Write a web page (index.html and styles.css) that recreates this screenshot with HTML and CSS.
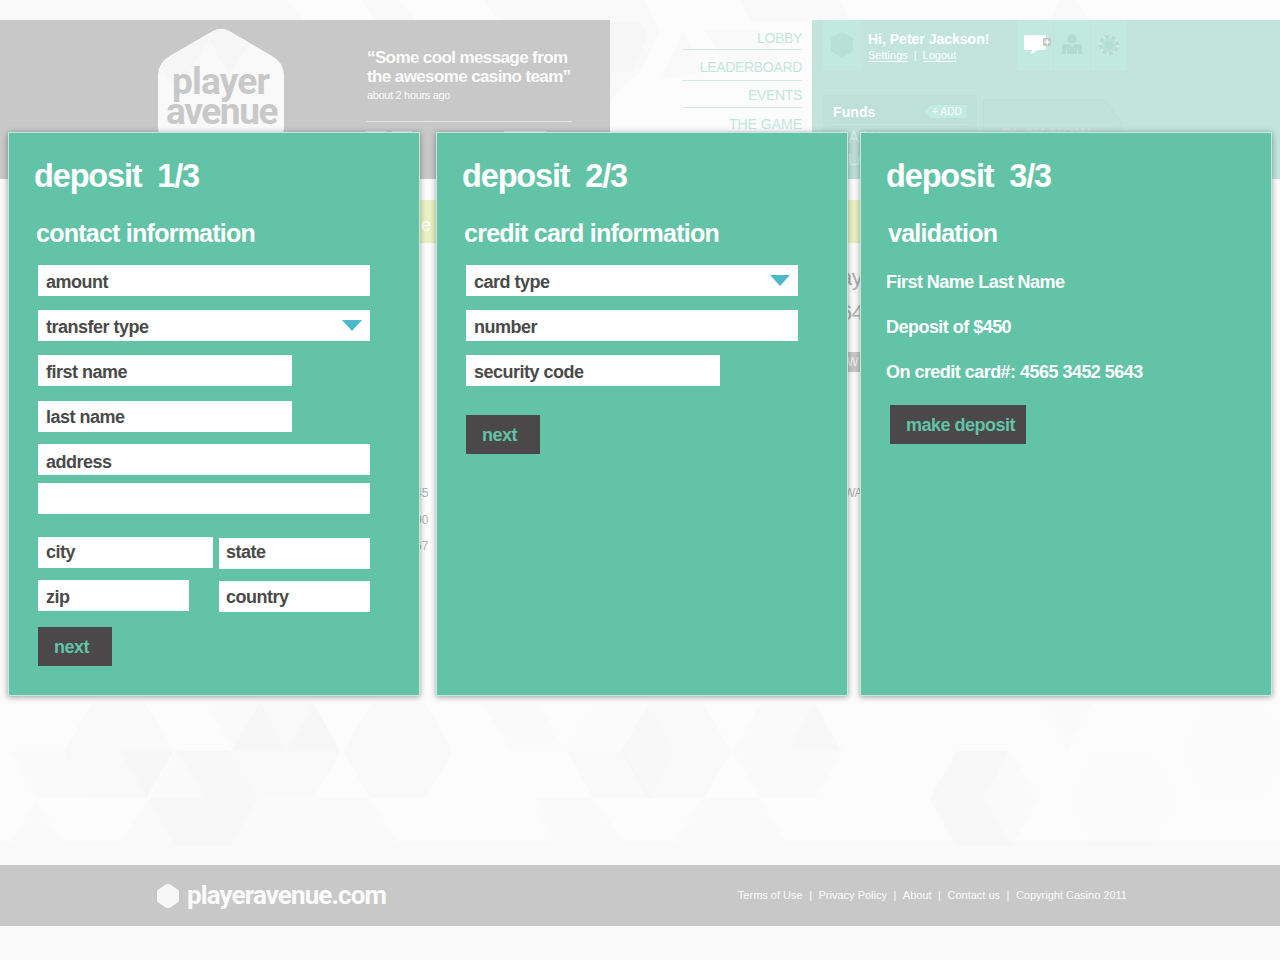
FILE: index.html
```html
<!DOCTYPE html>
<html lang="en">
<head>
<meta charset="utf-8">
<title>Player Avenue – Deposit</title>
<link rel="stylesheet" href="styles.css">
</head>
<body>
<div class="page">
  <svg class="backdrop" width="1280" height="960" viewBox="0 0 1280 960" aria-hidden="true">
    <rect width="1280" height="960" fill="#fcfcfc"/>
    <g fill="#000" fill-opacity=".012">
      <path d="M0 0H60L43 22H0ZM0 0H640V22H0ZM122 0H230L210 22H139ZM288 0L306 22H376L360 0ZM400 0L418 22H500L484 0ZM610 0H645L660 30L640 72L610 100ZM740 0H840L850 22H750ZM1060 0H1075L1092 22H1050Z"/>
      <path d="M610 22H640L648 35L632 72H610ZM705 30H760L786 72H730ZM660 80L683 30L705 72ZM0 180H20V700H0Z"/>
      <path id="hex" d="M92 703H146L172 747Q174 751 172 755L147 798H91L66 755Q64 751 66 747Z"/>
      <use href="#hex" x="167"/><use href="#hex" x="279"/><use href="#hex" x="557"/>
      <use href="#hex" x="669" opacity=".7"/><use href="#hex" x="502" opacity=".4"/><use href="#hex" x="1116" opacity=".4"/>
      <use href="#hex" x="84" y="48" opacity=".5"/><use href="#hex" x="865" y="48" opacity=".6"/><use href="#hex" x="1004" y="48" opacity=".4"/>
      <path d="M11 751H66L91 798H36ZM119 751H172L147 798ZM177 751H233L258 798H205ZM262 703L286 751H233L205 703ZM286 751L314 703L340 751ZM482 703H540L565 751H510ZM568 751H624L650 798H592ZM786 751L814 703L841 751ZM930 798L955 751H1009L984 798ZM1040 703H1092L1067 751Z" fill-opacity=".008"/>
      <path d="M36 800L62 841H11ZM147 798H258L285 841H122ZM258 798H370L397 841H285ZM535 798H592L625 841H550ZM700 798H760L786 841H675ZM930 798H984L1009 841H950Z" fill-opacity=".009"/>
      <path d="M0 841H1280V866H0ZM11 841H62V866H16ZM122 841H285L276 866H135ZM66 847H120L135 866H60ZM340 847H397L410 866H330ZM565 841H610L628 866H572ZM730 847H785L798 866H720ZM900 847H955L940 866H910ZM0 926H1280V960H0ZM70 926H170L160 942H66ZM175 926H300L290 942H180ZM335 926H449V942H342ZM122 942H172L160 960H110ZM342 942H449L440 960H352ZM510 942H555L570 960H520ZM730 926H840L830 942H738ZM1010 926H1054L1060 942H1010ZM1120 926H1170L1172 942H1122ZM1066 942H1118L1107 960H1077Z"/>
    </g>
  </svg>

  <header class="top">
    <div class="brand-bar">
      <div class="logo">
        <svg class="logo-shape" width="126" height="145" viewBox="0 0 126 145" aria-hidden="true">
          <path d="M55 2Q63-2 71 2L114 27Q126 34 126 46V99Q126 111 114 118L71 143Q63 147 55 143L12 118Q0 111 0 99V46Q0 34 12 27Z" fill="#f9f9f9"/>
          <path d="M51 10L71 46L92 14L71 2Q63-2 55 2ZM2 38L20 62L50 12V5L12 27Q4 32 2 38Z" fill="#f6f6f6"/>
        </svg>
        <div class="logo-text"><div>player</div><div class="second">avenue</div></div>
      </div>
      <div class="message">
        <p class="quote">“Some cool message from<br>the awesome casino team”</p>
        <p class="ago">about 2 hours ago</p>
        <div class="next-message"><i></i><i></i><i></i></div>
      </div>
    </div>
    <nav class="menu">
      <a>LOBBY</a><a>LEADERBOARD</a><a>EVENTS</a><a>THE GAME</a>
    </nav>
    <div class="account">
      <div class="user-row">
        <div class="avatar"><svg width="24" height="28" viewBox="0 0 24 28"><path d="M12 1L23 7V20L12 27L1 20V7Z" fill="#b8e0d7"/></svg></div>
        <div class="user">
          <strong>Hi, Peter Jackson!</strong>
          <div><a>Settings</a><span>|</span><a>Logout</a></div>
        </div>
        <div class="tools">
          <div class="tool"><svg width="32" height="28" viewBox="0 0 32 28"><path d="M7 4H25Q27 4 27 6V17Q27 19 25 19H19L12 23L13 19H7Q5 19 5 17V6Q5 4 7 4Z" fill="#fff"/><rect x="24" y="7" width="8" height="8" fill="#c3c9c7"/><path d="M28 8.500V13.500M25.500 11H30.500" stroke="#fff" stroke-width="1.500"/></svg></div>
          <div class="tool"><svg width="22" height="24" viewBox="0 0 22 24"><circle cx="11" cy="6" r="4.500" fill="#b2dcd2"/><path d="M1 21V13Q1 11 4 11H8L11 14L14 11H18Q21 11 21 13V21Z" fill="#b2dcd2"/><path d="M5.500 16V21M16.500 16V21" stroke="#c2e9e0"/></svg></div>
          <div class="tool"><svg width="22" height="22" viewBox="0 0 22 22"><circle cx="11" cy="11" r="8.500" fill="#bce3d9" stroke="#b6ddd3" stroke-width="3"/><circle cx="11" cy="11" r="8.500" fill="none" stroke="#cfece0" stroke-width="3" stroke-dasharray="2.500 4.170"/><circle cx="11" cy="11" r="4.500" fill="#b4ddd3"/></svg></div>
        </div>
      </div>
      <div class="money-row">
        <div class="funds">
          <div class="funds-head"><strong>Funds</strong><span class="add">+ ADD</span></div>
          <div class="funds-body">CASH<br>PLAY</div>
        </div>
        <div class="play"><svg width="140" height="60" viewBox="0 0 140 60"><path d="M.5 60V.5H117Q122 .5 125 5L140 27V60" fill="#c0e2da" stroke="#bbded6"/></svg><strong>PLAY NOW</strong></div>
      </div>
    </div>
  </header>

  <main class="content">
    <div class="banner"><span>e</span></div>
    <div class="stats-left"><span>45</span><span>90</span><span>67</span></div>
    <div class="stats-right"><b>ay</b><b>64</b><em>W</em><small>WA</small></div>
  </main>

  <footer class="footer">
    <div class="footer-logo">
      <svg width="22" height="24" viewBox="0 0 22 24"><path d="M9 .6Q11-.4 13 .6L20 5Q22 6 22 8V16Q22 18 20 19L13 23.400Q11 24.400 9 23.400L2 19Q0 18 0 16V8Q0 6 2 5Z" fill="#f7f7f7"/></svg>
      <span>playeravenue.com</span>
    </div>
    <div class="links"><a>Terms of Use</a><i>|</i><a>Privacy Policy</a><i>|</i><a>About</a><i>|</i><a>Contact us</a><i>|</i><span>Copyright Casino 2011</span></div>
  </footer>

  <div class="dialogs">
    <section class="dialog">
      <h1>deposit&nbsp; 1/3</h1>
      <h2>contact information</h2>
      <form class="form">
        <div class="field">amount</div>
        <div class="field select">transfer type<svg width="20" height="11"><path d="M0 0H20L10 11Z" fill="#4bb9cb"/></svg></div>
        <div class="field medium">first name</div>
        <div class="field medium last">last name</div>
        <div class="field address">address</div>
        <div class="field line2"></div>
        <div class="pair cities"><div class="field city">city</div><div class="field state">state</div></div>
        <div class="pair"><div class="field zip">zip</div><div class="field state">country</div></div>
        <div class="button submit">next</div>
      </form>
    </section>
    <section class="dialog">
      <h1>deposit&nbsp; 2/3</h1>
      <h2>credit card information</h2>
      <form class="form">
        <div class="field">card type<svg width="20" height="11"><path d="M0 0H20L10 11Z" fill="#4bb9cb"/></svg></div>
        <div class="field">number</div>
        <div class="field medium">security code</div>
        <div class="button card-next">next</div>
      </form>
    </section>
    <section class="dialog validation">
      <h1>deposit&nbsp; 3/3</h1>
      <h2>validation</h2>
      <div class="summary">
        <p>First Name Last Name</p>
        <p>Deposit of $450</p>
        <p>On credit card#: 4565 3452 5643</p>
      </div>
      <div class="button confirm">make deposit</div>
    </section>
  </div>
</div>
</body>
</html>
```

FILE: styles.css
```css
* { box-sizing: border-box; }
body { margin: 0; font-family: "Liberation Sans", Arial, sans-serif; background: #fcfcfc; }
h1, h2, p { margin: 0; }
svg { display: block; }
i, em { font-style: normal; }

.page { position: relative; width: 1280px; height: 960px; overflow: hidden; display: flex; flex-direction: column; padding-top: 20px; }
.backdrop { position: absolute; inset: 0; }

/* Header */
.top { position: relative; display: flex; height: 159px; flex: none; }
.brand-bar { width: 610px; background: #c8c8c8; display: flex; padding-left: 158px; }
.logo { position: relative; width: 126px; height: 145px; margin-top: 9px; }
.logo-shape { position: absolute; inset: 0; }
.logo-text { position: relative; padding: 38px 0 0 14px; font: 700 37px/30px Roboto, sans-serif; letter-spacing: -.8px; color: #c8c8c8; }
.logo-text .second { margin-left: -6px; letter-spacing: -1.4px; }
.message { width: 206px; margin-left: 82px; padding-top: 28px; color: #fbfbfb; white-space: nowrap; }
.quote { font-weight: 700; font-size: 17px; line-height: 19px; letter-spacing: -.61px; margin-left: 1px; }
.ago { font-size: 11px; line-height: 14px; margin: 2px 0 0 1px; letter-spacing: -.33px; }
.next-message { border-top: 1px solid #e6e6e6; margin-top: 19px; padding-top: 9px; display: flex; gap: 6px; }
.next-message i { width: 20px; height: 4px; background: #e8e8e8; }
.next-message i:last-child { width: 42px; margin-left: 86px; }

.menu { width: 202px; display: flex; flex-direction: column; padding: 7px 10px 0 72px; font-size: 14px; color: #c3e7dd; text-align: right; }
.menu a { border-bottom: 1px solid #d0ece5; height: 23px; line-height: 23px; letter-spacing: -.33px; }
.menu a:nth-child(2) { height: 31px; line-height: 34px; }
.menu a:nth-child(3) { height: 27px; line-height: 29px; }
.menu a:nth-child(4) { height: 33px; line-height: 33px; border: 0; letter-spacing: 0; }

.account { width: 468px; background: #c2e4dd; padding-left: 11px; color: #fff; }
.user-row { display: flex; height: 51px; }
.avatar { width: 38px; background: #c2e9e0; display: flex; align-items: center; justify-content: center; }
.avatar svg { margin-top: -1px; }
.user { width: 156px; padding: 10px 0 0 7px; font-size: 11px; white-space: nowrap; }
.user strong { display: block; font-size: 14px; line-height: 18px; }
.user div { line-height: 13px; margin-top: 1px; }
.user a { border-bottom: 1px solid #fff; display: inline-block; height: 13px; }
.user span { margin: 0 6px; }
.tools { display: flex; gap: 1px; }
.tool { width: 36px; background: #c2e9e0; display: flex; align-items: center; justify-content: center; }
.tool svg { margin-top: -2px; }
.money-row { display: flex; gap: 6px; margin-top: 24px; }
.funds { width: 154px; height: 84px; background: #bde0d8; padding: 0 10px; }
.funds-head { display: flex; justify-content: space-between; height: 30px; border-bottom: 1px solid #c8e6df; padding-top: 9px; }
.funds-head strong { font-size: 14px; line-height: 17px; letter-spacing: .1px; }
.add { margin-top: 1px; font-size: 10px; line-height: 13px; height: 13px; padding: 0 5px 0 8px; letter-spacing: .2px; background: #c2ebe1; clip-path: polygon(0 50%, 7px 0, 100% 0, 100% 100%, 7px 100%); }
.funds-body { font-size: 16px; line-height: 22px; padding: 2px 0 0 4px; color: #d7efe9; }
.play { position: relative; height: 60px; margin-top: 4px; }
.play strong { position: absolute; left: 18px; top: 26px; font-size: 17px; line-height: 20px; color: #d0e5da; letter-spacing: 0; white-space: nowrap; }

/* Page content showing between the dialogs */
.content { position: relative; height: 686px; flex: none; }
.banner { height: 43px; margin: 21px 153px 0 157px; background: #eaf1c5; }
.banner span { position: absolute; left: 421px; top: 33px; font-size: 18px; line-height: 26px; color: #fff; }
.stats-left { position: absolute; left: 415px; top: 301px; display: grid; font-size: 12px; line-height: 26.500px; color: #b5b5b5; }
.stats-right { position: absolute; left: 840px; top: 81px; display: grid; justify-items: start; color: #b0b0b0; }
.stats-right b { font-weight: 400; font-size: 22px; line-height: 35px; letter-spacing: -.5px; }
.stats-right em { font-size: 12px; line-height: 20px; background: #c8c8c8; color: #f3f3f3; padding: 0 4px 0 7px; margin-top: 22px; }
.stats-right small { font-size: 12px; line-height: 14px; margin: 114px 0 0 4px; letter-spacing: -.5px; }

/* Footer */
.footer { position: relative; height: 61px; flex: none; background: #c8c8c8; color: #fbfbfb; display: flex; justify-content: space-between; align-items: center; padding: 0 153px 0 157px; }
.footer-logo { display: flex; align-items: center; gap: 8px; font: 700 26px/30px Roboto, sans-serif; letter-spacing: -.9px; }
.footer-logo span { margin-top: -1px; }
.links { display: flex; font-size: 11px; margin-top: -2px; }
.links i { margin: 0 6.500px; }

/* Deposit dialogs */
.dialogs { position: absolute; inset: 132px 8px auto 8px; display: flex; }
.dialog { width: 412px; height: 564px; border: 1px solid #c5e8df; background: #62c3a7; box-shadow: 0 1px 6px rgba(0, 0, 0, .38); padding: 23px 0 0 25px; color: #fff; font-weight: 700; margin-right: 16px; flex: none; }
.dialog:nth-child(2) { margin-right: 12px; }
.dialog:nth-child(3) { margin-right: 0; }
h1 { font-size: 32.500px; line-height: 40px; letter-spacing: -1.15px; }
h2 { font-size: 25px; line-height: 30px; letter-spacing: -.75px; margin: 22px 0 0 2px; }
.form { margin: 17px 0 0 4px; width: 332px; display: flex; flex-direction: column; }
.field { height: 31px; background: #fff; color: #4a4a4a; font-size: 18px; line-height: 34px; letter-spacing: -.5px; padding-left: 8px; margin-bottom: 14px; display: flex; justify-content: space-between; }
.field svg { margin: 10px 8px 0 0; }
.medium { width: 254px; }
.form .medium + .last { margin: 1px 0 12px; line-height: 32px; }
.address { margin-bottom: 8px; line-height: 36px; }
.form .line2 { margin-bottom: 23px; }
.pair { display: flex; justify-content: space-between; height: 43px; }
.pair .field { line-height: 30px; }
.city { width: 175px; }
.pair .state { width: 151px; margin-top: 1px; padding-left: 7px; line-height: 28px; }
.zip { width: 151px; }
.pair:not(.cities) .field { line-height: 34px; }
.pair:not(.cities) .state { line-height: 32px; }
.button { width: 74px; height: 39px; background: #4a4849; color: #62c3a7; font-size: 18px; line-height: 40px; letter-spacing: -.5px; padding-left: 16px; }
.submit { margin-top: 4px; }
.card-next { margin-top: 15px; }
.summary { font-size: 18px; line-height: 45px; letter-spacing: -.53px; margin-top: 12px; }
.confirm { width: 136px; margin: 10px 0 0 4px; }
```
